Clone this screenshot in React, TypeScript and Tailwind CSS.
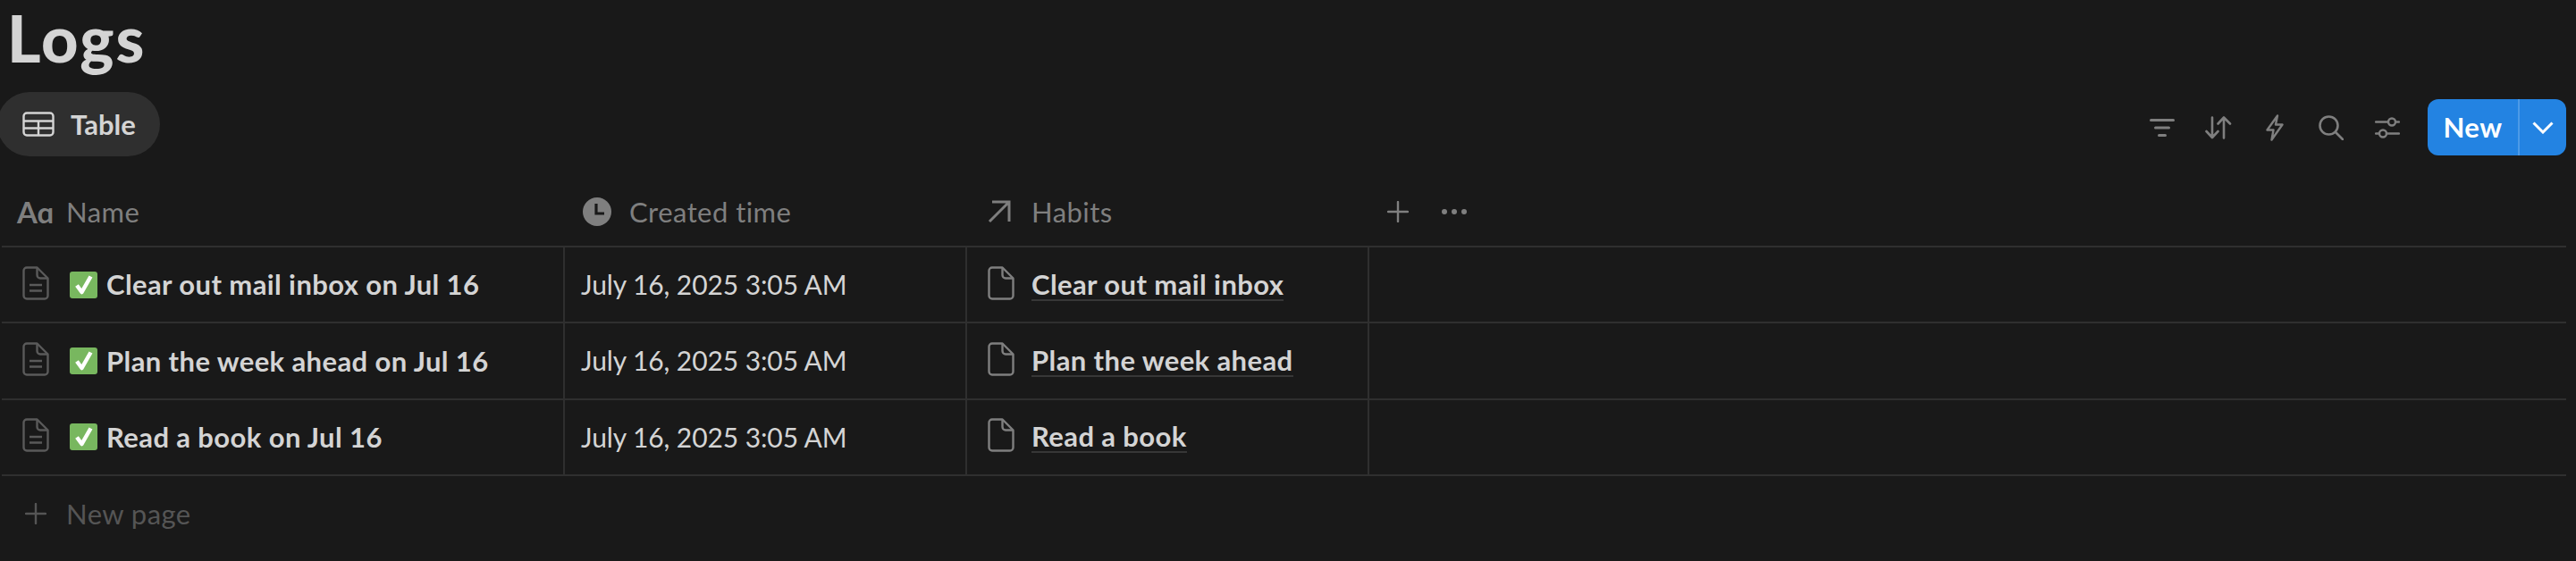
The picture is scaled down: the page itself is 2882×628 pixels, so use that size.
const rows = [
  { name: "Clear out mail inbox on Jul 16", habit: "Clear out mail inbox" },
  { name: "Plan the week ahead on Jul 16", habit: "Plan the week ahead" },
  { name: "Read a book on Jul 16", habit: "Read a book" },
];

function TableIcon() {
  return (
    <svg width="36" height="28" viewBox="0 0 36 28" fill="none" stroke="#d4d4d4" strokeWidth="2.4">
      <rect x="1.5" y="1.5" width="33" height="25" rx="3.5" />
      <path d="M1.5 10.5h33M1.5 18.5h33M18 10.5v16" />
    </svg>
  );
}

function FilterIcon() {
  return (
    <svg width="28" height="20" viewBox="0 0 28 20" fill="none" stroke="#7f7f7f" strokeWidth="3" strokeLinecap="round">
      <path d="M1.5 1.5h25M6.5 10h15M10.5 18.5h7" />
    </svg>
  );
}

function SortIcon() {
  return (
    <svg width="30" height="26" viewBox="0 0 30 26" fill="none" stroke="#7f7f7f" strokeWidth="2.6" strokeLinecap="round" strokeLinejoin="round">
      <path d="M8 1.5v22M1.5 17l6.5 7 6.5-7M21 24.5V1.5M14.5 8.5l6.5-7 7 7" />
    </svg>
  );
}

function BoltIcon() {
  return (
    <svg width="20" height="30" viewBox="0 0 20 30" fill="none" stroke="#7f7f7f" strokeWidth="2.4" strokeLinejoin="round">
      <path d="M13 1.5 1.5 17.5h7L6.5 28.5 18.5 11.5h-7.5L13 1.5Z" />
    </svg>
  );
}

function SearchIcon() {
  return (
    <svg width="28" height="28" viewBox="0 0 28 28" fill="none" stroke="#7f7f7f" strokeWidth="2.6" strokeLinecap="round">
      <circle cx="11.5" cy="11.5" r="10" />
      <path d="m19 19 8 8" />
    </svg>
  );
}

function SlidersIcon() {
  return (
    <svg width="28" height="24" viewBox="0 0 28 24" fill="none" stroke="#7f7f7f" strokeWidth="2.4" strokeLinecap="round">
      <path d="M1 5.500h14M23 5.500h4M1 18.500h4M13 18.500h14" />
      <circle cx="19" cy="5.500" r="4" />
      <circle cx="9" cy="18.500" r="4" />
    </svg>
  );
}

function ClockIcon() {
  return (
    <svg width="32" height="32" viewBox="0 0 32 32">
      <circle cx="16" cy="16" r="16" fill="#7f7f7f" />
      <path d="M15 7v11h9" fill="none" stroke="#191919" strokeWidth="3.2" />
    </svg>
  );
}

function ArrowIcon() {
  return (
    <svg width="26" height="26" viewBox="0 0 26 26" fill="none" stroke="#7f7f7f" strokeWidth="3">
      <path d="M5 2h19v22M23.500 2.500 2 24" />
    </svg>
  );
}

function PlusIcon({ color, size }: { color: string; size: number }) {
  return (
    <svg width={size} height={size} viewBox="0 0 24 24" fill="none" stroke={color} strokeWidth="2.4" strokeLinecap="round">
      <path d="M12 1v22M1 12h22" />
    </svg>
  );
}

function PageIcon({ color, lines }: { color: string; lines?: boolean }) {
  return (
    <svg className="mb-[4px]" width="30" height="38" viewBox="0 0 30 38" fill="none" stroke={color} strokeWidth="2.4" strokeLinejoin="round">
      <path d="M5 1.500h11.500L28.500 13.500V33a3.500 3.500 0 0 1-3.500 3.500H5A3.500 3.500 0 0 1 1.500 33V5A3.500 3.500 0 0 1 5 1.500Z" />
      <path d="M16.500 1.500V10a3.500 3.500 0 0 0 3.500 3.500h8.500" />
      {lines && <path d="M8 21h14M8 27.500h14" />}
    </svg>
  );
}

function CheckEmoji() {
  return (
    <svg width="31" height="30" viewBox="0 0 31 30">
      <rect width="31" height="30" rx="3" fill="#78b75f" />
      <path d="M8 15.500 13.500 23 23.500 5.500" fill="none" stroke="#fff" strokeWidth="4.5" strokeLinejoin="round" />
    </svg>
  );
}

export default function App() {
  return (
    <div className="h-[628px] w-[2882px] overflow-hidden bg-[#191919] font-['Lato','Liberation_Sans',sans-serif] text-[#d4d4d4]">
      {/* Title */}
      <h1 className="h-[103px] pl-[8px] text-[72px] leading-[84px] font-black tracking-[2px]">Logs</h1>

      {/* Views and actions */}
      <div className="flex h-[72px] items-center justify-between pr-[11px]">
        <div className="-ml-[3px] flex h-[72px] w-[182px] items-center gap-[18px] rounded-full bg-[#2f2f2f] pl-[28px]">
          <TableIcon />
          <span className="text-[31px] font-bold">Table</span>
        </div>
        <div className="mt-[7px] flex items-center">
          <div className="flex items-center pr-[14px]">
            <span className="flex w-[63px] justify-center"><FilterIcon /></span>
            <span className="flex w-[63px] justify-center"><SortIcon /></span>
            <span className="flex w-[63px] justify-center"><BoltIcon /></span>
            <span className="flex w-[63px] justify-center"><SearchIcon /></span>
            <span className="flex w-[63px] justify-center"><SlidersIcon /></span>
          </div>
          <div className="flex h-[63px] w-[155px] rounded-[12px] bg-[#2383e2] text-white">
            <span className="flex w-[103px] items-center justify-center border-r-2 border-r-[#4d9be8] text-[31px] font-bold tracking-[0.45px]">New</span>
            <span className="flex flex-1 items-center justify-center">
              <svg width="24" height="14" viewBox="0 0 24 14" fill="none" stroke="#fff" strokeWidth="3">
                <path d="m1.500 1.500 10.500 10.500 10.500-10.500" />
              </svg>
            </span>
          </div>
        </div>
      </div>

      {/* Table */}
      <div className="ml-[2px] mr-[11px]">
        <div className="flex h-[102px] items-center border-b-2 border-b-[#2f2f2f] pt-[24px] text-[31px] tracking-[0.45px] text-[#7f7f7f]">
          <div className="flex w-[630px] items-center pl-[17px]">
            <span className="w-[55px] text-[33px] leading-none font-bold tracking-[-0.5px]">Aɑ</span>
            <span>Name</span>
          </div>
          <div className="flex w-[450px] items-center gap-[20px] pl-[20px]">
            <ClockIcon />
            <span>Created time</span>
          </div>
          <div className="flex w-[450px] items-center gap-[23px] pl-[23px]">
            <ArrowIcon />
            <span>Habits</span>
          </div>
          <div className="flex items-center gap-[37px] pl-[20px]">
            <PlusIcon color="#7f7f7f" size={24} />
            <span className="flex gap-[5px]">
              <span className="h-[6px] w-[6px] rounded-full bg-[#7f7f7f]" />
              <span className="h-[6px] w-[6px] rounded-full bg-[#7f7f7f]" />
              <span className="h-[6px] w-[6px] rounded-full bg-[#7f7f7f]" />
            </span>
          </div>
        </div>

        {rows.map((row) => (
          <div key={row.name} className="flex h-[85.33px] border-b-2 border-b-[#2f2f2f] text-[30px]">
            <div className="flex w-[630px] items-center border-r-2 border-r-[#2f2f2f] pl-[23px] text-[31px] font-bold tracking-[0.4px]">
              <PageIcon color="#5a5a5a" lines />
              <span className="ml-[23px] mr-[10px] flex"><CheckEmoji /></span>
              <span>{row.name}</span>
            </div>
            <div className="flex w-[450px] items-center border-r-2 border-r-[#2f2f2f] pl-[18px] tracking-[-0.1px]">
              July 16, 2025 3:05 AM
            </div>
            <div className="flex w-[450px] items-center border-r-2 border-r-[#2f2f2f] pl-[23px] text-[31px] font-bold tracking-[0.4px]">
              <PageIcon color="#7f7f7f" />
              <span className="ml-[19px] border-b-2 border-b-[#373737] leading-[34px]">{row.habit}</span>
            </div>
          </div>
        ))}

        <div className="flex h-[85px] items-center gap-[22px] pl-[26px] text-[31px] tracking-[0.45px] text-[#555555]">
          <PlusIcon color="#555555" size={24} />
          <span>New page</span>
        </div>
      </div>
    </div>
  );
}
